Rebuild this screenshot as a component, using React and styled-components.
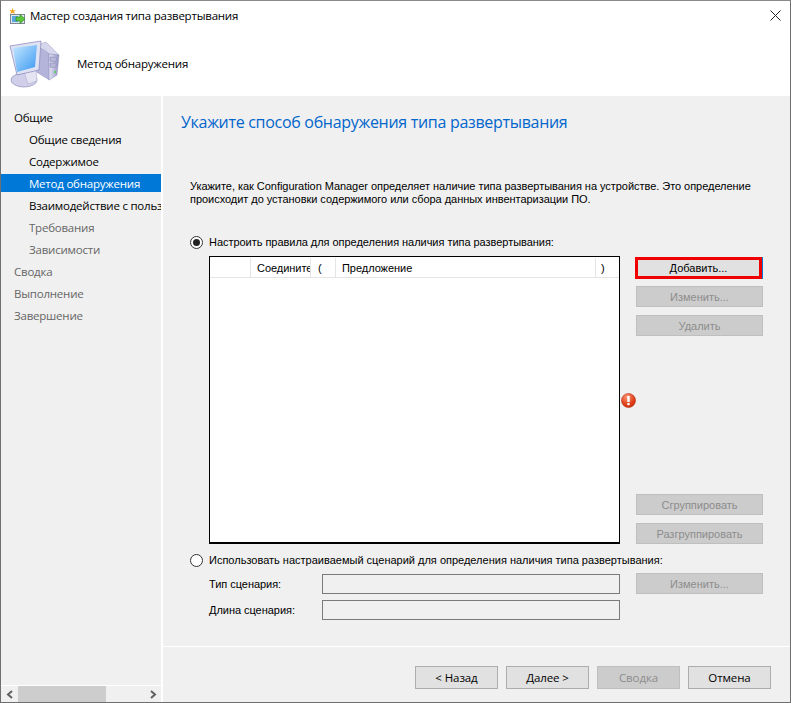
import React from 'react';
import styled, { createGlobalStyle } from 'styled-components';

const GlobalStyle = createGlobalStyle`
  html, body { margin: 0; padding: 0; background: #f0f0f0; }
  * { box-sizing: border-box; }
`;

const Window = styled.div`
  width: 791px;
  height: 703px;
  display: flex;
  flex-direction: column;
  border: 1px solid #6f6f6f;
  border-top-color: #8a8a8a;
  background: #fff;
  overflow: hidden;
  font-family: "Open Sans", sans-serif;
  font-size: 11.5px;
  letter-spacing: -0.22px;
  color: #000;
`;

const TitleBar = styled.div`
  height: 29px;
  display: flex;
  align-items: center;
  flex: none;
  padding-left: 8px;
  gap: 3px;
`;

const TitleText = styled.span`
  flex: 1;
`;

const CloseBox = styled.div`
  width: 30px;
  height: 29px;
  display: flex;
  align-items: center;
  justify-content: center;
`;

const Banner = styled.div`
  height: 66px;
  flex: none;
  display: flex;
  align-items: center;
  padding-left: 8px;
  gap: 16px;
`;

const Body = styled.div`
  flex: 1;
  display: flex;
  min-height: 0;
`;

const Sidebar = styled.div`
  width: 162px;
  flex: none;
  background: #f0f0f0;
  border-right: 2px solid #fff;
  display: flex;
  flex-direction: column;
`;

const NavList = styled.div`
  flex: 1;
  padding-top: 12px;
  overflow: hidden;
`;

const NavItem = styled.div`
  height: 18px;
  margin-bottom: 4px;
  line-height: 19px;
  padding-left: ${p => (p.$sub ? 28 : 13)}px;
  white-space: nowrap;
  overflow: hidden;
  color: ${p => (p.$active ? '#fff' : p.$muted ? '#666' : '#000')};
  background: ${p => (p.$active ? '#0078d7' : 'transparent')};
`;

const ScrollBar = styled.div`
  height: 17px;
  flex: none;
  border-top: 1px solid #fff;
  background: #f0f0f0;
  display: flex;
  align-items: stretch;
`;

const ScrollArrow = styled.div`
  width: 17px;
  flex: none;
  display: flex;
  align-items: center;
  justify-content: center;
`;

const ScrollThumb = styled.div`
  width: 88px;
  background: #cdcdcd;
  margin-right: auto;
`;

const Panel = styled.div`
  flex: 1;
  background: #f0f0f0;
  display: flex;
  flex-direction: column;
  min-width: 0;
`;

const Content = styled.div`
  height: 551px;
  flex: none;
  padding: 15px 27px 0 18px;
  border-bottom: 1px solid #fff;
  font-family: "Liberation Sans", sans-serif;
  font-size: 11px;
  letter-spacing: -0.04px;
`;

const Heading = styled.h1`
  margin: 0;
  font-family: "Open Sans", sans-serif;
  font-weight: 400;
  font-size: 16px;
  line-height: 22px;
  color: #0066cc;
  letter-spacing: -0.3px;
`;

const Description = styled.p`
  margin: 47px 0 0 9px;
  line-height: 13px;
  width: 575px;
`;

const RadioRow = styled.label`
  display: flex;
  align-items: center;
  gap: 6px;
  height: 14px;
  margin: ${p => p.$top}px 0 0 9px;
  letter-spacing: ${p => p.$spacing ?? -0.04}px;
`;

const Radio = styled.span`
  width: 13px;
  height: 13px;
  flex: none;
  border-radius: 50%;
  border: 1px solid #333;
  background: #fff;
  display: flex;
  align-items: center;
  justify-content: center;
  &::after {
    content: '';
    width: 7px;
    height: 7px;
    border-radius: 50%;
    background: ${p => (p.$on ? '#222' : 'transparent')};
  }
`;

const RulesRow = styled.div`
  display: flex;
  margin: 7px 0 0 28px;
  height: 288px;
`;

const Table = styled.div`
  width: 411px;
  flex: none;
  border: 1px solid #000;
  border-width: 1px 1px 2px 1px;
  background: #fff;
  padding-top: 1px;
`;

const TableHead = styled.div`
  height: 20px;
  display: flex;
  border-bottom: 1px solid #e5e5e5;
`;

const HeadCell = styled.div`
  width: ${p => p.$w}px;
  flex: ${p => (p.$w ? 'none' : 1)};
  line-height: 20px;
  padding-left: ${p => p.$pad ?? 6}px;
  border-right: ${p => (p.$last ? 'none' : '1px solid #e5e5e5')};
  overflow: hidden;
  white-space: nowrap;
`;

const Gutter = styled.div`
  width: 16px;
  flex: none;
  display: flex;
  align-items: center;
  justify-content: center;
`;

const ButtonColumn = styled.div`
  width: 127px;
  flex: none;
  padding-top: 1px;
  display: flex;
  flex-direction: column;
  gap: 8px;
`;

const Spacer = styled.div`
  flex: 1;
`;

const Btn = styled.button`
  height: 21px;
  width: 100%;
  flex: none;
  padding: 0;
  font-family: "Liberation Sans", sans-serif;
  font-size: 11px;
  background: ${p => (p.disabled ? '#cccccc' : '#e1e1e1')};
  color: ${p => (p.disabled ? '#8c8c8c' : '#000')};
  border: ${p => (p.disabled ? '1px solid #bfbfbf' : '1px solid #adadad')};
`;

const FocusButton = styled(Btn)`
  height: 22px;
  margin: 0 0 -1px -1px;
  border: 3px solid #f00000;
  box-shadow: 1px 0 0 #0078d7;
`;

const FieldRow = styled.div`
  display: flex;
  align-items: center;
  margin: ${p => p.$top}px 0 0 28px;
  height: ${p => p.$h}px;
`;

const FieldLabel = styled.span`
  width: 113px;
  flex: none;
`;

const Field = styled.div`
  width: 298px;
  height: 20px;
  flex: none;
  border: 1px solid #7a7a7a;
  background: #f0f0f0;
`;

const SideButton = styled.div`
  width: 127px;
  flex: none;
  margin-left: 16px;
`;

const Footer = styled.div`
  flex: 1;
  display: flex;
  justify-content: flex-end;
  align-items: flex-start;
  gap: 8px;
  padding: 19px 19px 0 0;
`;

const FooterButton = styled(Btn)`
  width: 83px;
  height: 23px;
  font-family: "Open Sans", sans-serif;
  font-size: 11.5px;
  letter-spacing: -0.1px;
`;

const WizardIcon = () => (
  <svg width="18" height="18" viewBox="9 6 18 18">
    <rect x="10.500" y="13.500" width="14" height="9" fill="#dfe6ee" stroke="#7c8794" />
    <rect x="12" y="15" width="6" height="6" fill="#5aa7e0" />
    <path d="M16 16h4v-2.500l5 4.500-5 4.500V20h-4z" fill="#5fc63c" stroke="#2f8f22" strokeWidth=".7" />
    <path d="M12.500 7l.9 2.200 2.400-.2-1.800 1.600.9 2.400-2.400-1.200-2.400 1.200.9-2.400L9.500 9l2.200.2z" fill="#f5a623" />
  </svg>
);

// viewBox is in page coordinates, easier to compare with the reference
const ComputerIcon = () => (
  <svg width="52" height="52" viewBox="9 37 52 52">
    <defs>
      <linearGradient id="screen" x1="0" y1="0" x2="1" y2="1">
        <stop offset="0" stopColor="#c4e8ff" />
        <stop offset="1" stopColor="#3b98f2" />
      </linearGradient>
      <linearGradient id="tower" x1="0" y1="0" x2="1" y2="0">
        <stop offset="0" stopColor="#e4e4f4" />
        <stop offset="1" stopColor="#9494c6" />
      </linearGradient>
    </defs>
    <path d="M40 44l6-2 13 13-10-1z" fill="#d6d6ec" stroke="#a0a0c8" strokeWidth=".5" />
    <path d="M38 45l11 9 .5 26-13-8z" fill="#b4b4da" stroke="#8f8fbc" strokeWidth=".5" />
    <path d="M49 54l10 1-2 20-8 5z" fill="url(#tower)" stroke="#8a8ab8" strokeWidth=".5" />
    <path d="M50 57l6.500.5-.3 4-6.200-.3z" fill="#b7b7d8" stroke="#8383b0" strokeWidth=".5" />
    <path d="M50 63l6.200.3-.3 4-5.900-.1z" fill="#b7b7d8" stroke="#8383b0" strokeWidth=".5" />
    <rect x="54" y="71" width="2" height="2" fill="#5fd05f" />
    <ellipse cx="24" cy="80" rx="13" ry="7" fill="#cfcfe9" stroke="#8f8fbc" strokeWidth=".7" />
    <path d="M24 72l12-3 1 12-9 3z" fill="#e4e4f3" stroke="#a5a5cc" strokeWidth=".5" />
    <path d="M10 46l31-5-2 29-22 5z" fill="#dfe2f3" stroke="#8f8fc0" strokeWidth=".8" />
    <path d="M13 48l24-3-2 22-18 5z" fill="url(#screen)" />
  </svg>
);

const ErrorIcon = () => (
  <svg width="15" height="15" viewBox="0 0 15 15">
    <defs>
      <radialGradient id="err" cx=".4" cy=".25" r=".85">
        <stop offset="0" stopColor="#fb9a7c" />
        <stop offset=".6" stopColor="#e2401a" />
        <stop offset="1" stopColor="#c7280a" />
      </radialGradient>
    </defs>
    <circle cx="7.500" cy="7.500" r="7" fill="url(#err)" stroke="#b5310f" strokeWidth=".6" />
    <rect x="6.300" y="3" width="2.400" height="6" fill="#fff" />
    <rect x="6.300" y="10" width="2.400" height="2.200" fill="#fff" />
  </svg>
);

const Chevron = ({ dir }) => (
  <svg width="8" height="9" viewBox="0 0 8 9">
    <path
      d={dir === 'left' ? 'M6 1L2 4.500 6 8' : 'M2 1l4 3.500L2 8'}
      fill="none"
      stroke="#606060"
      strokeWidth="2"
    />
  </svg>
);

const App = () => (
  <>
    <GlobalStyle />
    <Window>
      <TitleBar>
        <WizardIcon />
        <TitleText>Мастер создания типа развертывания</TitleText>
        <CloseBox>
          <svg width="11" height="11" viewBox="0 0 11 11">
            <path d="M.5.500l10 10M10.500.500l-10 10" stroke="#222" strokeWidth="1" />
          </svg>
        </CloseBox>
      </TitleBar>
      <Banner>
        <ComputerIcon />
        <span>Метод обнаружения</span>
      </Banner>
      <Body>
        <Sidebar>
          <NavList>
            <NavItem>Общие</NavItem>
            <NavItem $sub>Общие сведения</NavItem>
            <NavItem $sub>Содержимое</NavItem>
            <NavItem $sub $active>Метод обнаружения</NavItem>
            <NavItem $sub>Взаимодействие с пользователем</NavItem>
            <NavItem $sub $muted>Требования</NavItem>
            <NavItem $sub $muted>Зависимости</NavItem>
            <NavItem $muted>Сводка</NavItem>
            <NavItem $muted>Выполнение</NavItem>
            <NavItem $muted>Завершение</NavItem>
          </NavList>
          <ScrollBar>
            <ScrollArrow><Chevron dir="left" /></ScrollArrow>
            <ScrollThumb />
            <ScrollArrow><Chevron dir="right" /></ScrollArrow>
          </ScrollBar>
        </Sidebar>
        <Panel>
          <Content>
            <Heading>Укажите способ обнаружения типа развертывания</Heading>
            <Description>
              Укажите, как Configuration Manager определяет наличие типа развертывания на устройстве. Это определение
              происходит до установки содержимого или сбора данных инвентаризации ПО.
            </Description>
            <RadioRow $top={29}>
              <Radio $on />
              Настроить правила для определения наличия типа развертывания:
            </RadioRow>
            <RulesRow>
              <Table>
                <TableHead>
                  <HeadCell $w={41} />
                  <HeadCell $w={60}>Соедините</HeadCell>
                  <HeadCell $w={25} $pad={7}>(</HeadCell>
                  <HeadCell>Предложение</HeadCell>
                  <HeadCell $w={23} $last $pad={5}>)</HeadCell>
                </TableHead>
              </Table>
              <Gutter><ErrorIcon /></Gutter>
              <ButtonColumn>
                <FocusButton>Добавить...</FocusButton>
                <Btn disabled>Изменить...</Btn>
                <Btn disabled>Удалить</Btn>
                <Spacer />
                <Btn disabled>Сгруппировать</Btn>
                <Btn disabled>Разгруппировать</Btn>
              </ButtonColumn>
            </RulesRow>
            <RadioRow $top={9} $spacing={0}>
              <Radio />
              Использовать настраиваемый сценарий для определения наличия типа развертывания:
            </RadioRow>
            <FieldRow $top={3} $h={27}>
              <FieldLabel>Тип сценария:</FieldLabel>
              <Field />
              <SideButton><Btn disabled>Изменить...</Btn></SideButton>
            </FieldRow>
            <FieldRow $top={0} $h={26}>
              <FieldLabel>Длина сценария:</FieldLabel>
              <Field />
            </FieldRow>
          </Content>
          <Footer>
            <FooterButton>&lt; Назад</FooterButton>
            <FooterButton>Далее &gt;</FooterButton>
            <FooterButton disabled>Сводка</FooterButton>
            <FooterButton>Отмена</FooterButton>
          </Footer>
        </Panel>
      </Body>
    </Window>
  </>
);

export default App;
